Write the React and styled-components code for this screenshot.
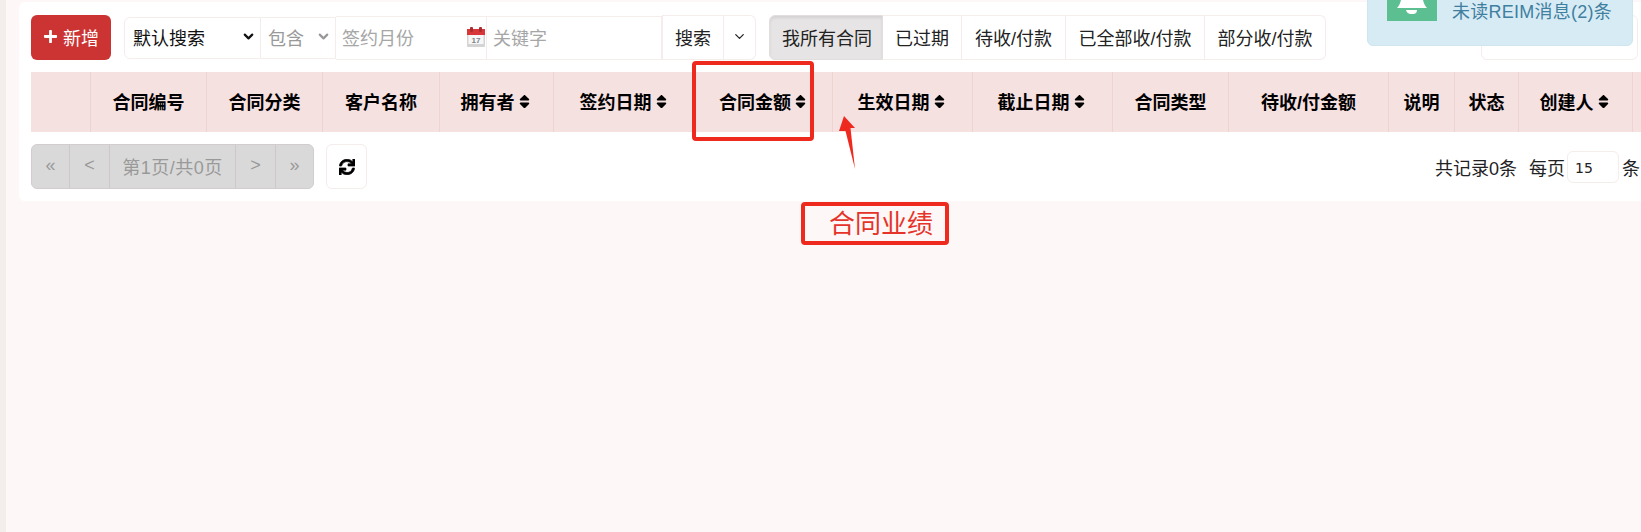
import React from 'react';
import styled, {createGlobalStyle} from 'styled-components';
import {ChevronDown} from 'lucide-react';
import {FaPlus, FaSort, FaSync} from 'react-icons/fa';

const GlobalStyle = createGlobalStyle`
    html, body {
        margin: 0;
        height: 100%;
        overflow: hidden;
        background: #fdf8f7;
    }
    body {
        font-family: "Liberation Sans", "Noto Sans CJK SC", sans-serif;
        font-size: 18px;
        color: #222;
    }
`
const Page = styled.div`
    display: flex;
    height: 532px;
    position: relative;
    overflow: hidden;
`
const SideStrip = styled.div`
    width: 6px;
    background: #f3eeec;
    flex-shrink: 0;
`
const Main = styled.div`
    flex: 1;
    min-width: 0;
    padding: 2px 0 0 13px;
`
const Card = styled.div`
    background: #fff;
    border-radius: 6px 0 0 6px;
    padding: 13px 0 12px 12px;
    overflow: hidden;
`
const Toolbar = styled.div`
    display: flex;
    align-items: center;
    height: 45px;
    padding-right: 3px;
`
const AddButton = styled.button`
    display: flex;
    align-items: center;
    justify-content: center;
    gap: 5px;
    width: 80px;
    height: 45px;
    margin-right: 13px;
    padding: 0 0 2px;
    border: none;
    border-radius: 6px;
    background: #cc3333;
    color: #fff;
    font: inherit;
`
const SelectBox = styled.div`
    display: flex;
    align-items: center;
    justify-content: space-between;
    box-sizing: border-box;
    width: ${p => p.$w}px;
    height: 42px;
    padding: 0 4px 2px ${p => (p.$first ? 8 : 7)}px;
    border: 1px solid #f5ecec;
    border-left-width: ${p => (p.$first ? 1 : 0)}px;
    border-radius: ${p => (p.$first ? '6px 0 0 6px' : '0')};
    color: ${p => (p.$muted ? '#999' : '#111')};
`
const Field = styled.div`
    display: flex;
    align-items: center;
    justify-content: space-between;
    box-sizing: border-box;
    width: ${p => p.$w}px;
    height: 44px;
    padding: 0 1px 2px 6px;
    border: 1px solid #f5ecec;
    border-left-width: 0;
    color: #a6a6a6;
`
const JoinButton = styled.button`
    display: flex;
    align-items: center;
    justify-content: center;
    box-sizing: border-box;
    width: ${p => p.$w}px;
    height: 45px;
    padding: 0 0 2px;
    background: #fff;
    border: 1px solid #f5ecec;
    border-left-width: ${p => (p.$last ? 0 : 1)}px;
    border-radius: ${p => (p.$last ? '0 6px 6px 0' : '0')};
    color: #222;
    font: inherit;
`
const Tabs = styled.div`
    display: flex;
    margin-left: 13px;
`
const Tab = styled.button`
    box-sizing: border-box;
    width: ${p => p.$w}px;
    height: 45px;
    padding: 0 0 2px ${p => (p.$active ? 2 : 0)}px;
    background: ${p => (p.$active ? '#e6e4e4' : '#fff')};
    border: 1px solid ${p => (p.$active ? '#e2dede' : '#f5ecec')};
    border-left-width: ${p => (p.$active ? 1 : 0)}px;
    box-shadow: ${p => (p.$active ? 'inset 0 2px 3px rgba(0, 0, 0, 0.08)' : 'none')};
    color: #222;
    font: inherit;
    &:first-child {
        border-radius: 6px 0 0 6px;
    }
    &:last-child {
        border-radius: 0 6px 6px 0;
    }
`
const ExportButton = styled.button`
    box-sizing: border-box;
    width: 157px;
    height: 45px;
    margin-left: auto;
    padding: 4px 0 0 48px;
    background: #fff;
    border: 1px solid #f5ecec;
    border-radius: 6px;
    color: #222;
    font: inherit;
    text-align: left;
`
const Notice = styled.div`
    position: absolute;
    top: -8px;
    left: 1367px;
    display: flex;
    align-items: flex-end;
    gap: 15px;
    box-sizing: border-box;
    width: 266px;
    height: 54px;
    padding: 0 0 20px 19px;
    background: #d7ebf5;
    border: 1px solid #cfe6f0;
    border-radius: 6px;
    color: #3f7f9f;
    line-height: 25px;
    letter-spacing: 0.25px;
`
const NoticeIcon = styled.svg`
    flex-shrink: 0;
    margin-bottom: 4px;
`
const HeadRow = styled.div`
    display: flex;
    height: 60px;
    margin-top: 12px;
    background: #f6e1e1;
`
const HeadCell = styled.div`
    display: flex;
    align-items: center;
    justify-content: center;
    gap: 1px;
    box-sizing: border-box;
    flex: 0 0 ${p => p.$w}px;
    padding-bottom: 2px;
    border-right: 1px solid #efd3d3;
    font-weight: 700;
    color: #000;
`
const Footer = styled.div`
    display: flex;
    align-items: center;
    height: 45px;
    margin-top: 12px;
`
const Pager = styled.div`
    display: flex;
    height: 45px;
    box-sizing: border-box;
    background: #d9d9d9;
    border: 1px solid #d2cccc;
    border-radius: 6px;
`
const PagerItem = styled.div`
    display: flex;
    align-items: center;
    justify-content: center;
    box-sizing: border-box;
    width: ${p => p.$w}px;
    padding-bottom: 2px;
    border-right: 1px solid #d0c8c8;
    color: #999;
    letter-spacing: ${p => (p.$wide ? 0.5 : 0)}px;
    &:last-child {
        border-right: none;
    }
`
const RefreshButton = styled.button`
    display: flex;
    align-items: center;
    justify-content: center;
    width: 41px;
    height: 45px;
    margin-left: 12px;
    padding: 0;
    background: #fff;
    border: 1px solid #f5ecec;
    border-radius: 6px;
    color: #000;
`
const Summary = styled.div`
    display: flex;
    align-items: center;
    gap: 12px;
    margin-left: auto;
    padding-right: 1px;
    color: #222;
    white-space: nowrap;
`
const PageSize = styled.div`
    display: flex;
    align-items: center;
`
const SizeInput = styled.div`
    box-sizing: border-box;
    width: 52px;
    height: 32px;
    margin: 0 3px 0 2px;
    padding-left: 7px;
    border: 1px solid #f5ecec;
    border-radius: 6px;
    font-family: "DejaVu Sans", sans-serif;
    font-size: 14px;
    line-height: 32px;
`
const MarkBox = styled.div`
    position: absolute;
    box-sizing: border-box;
    left: ${p => p.$x}px;
    top: ${p => p.$y}px;
    width: ${p => p.$w}px;
    height: ${p => p.$h}px;
    border: 4px solid #ee2a1f;
    border-radius: 4px;
`
const MarkLabel = styled(MarkBox)`
    display: flex;
    align-items: center;
    padding-left: 24px;
    color: #e5332a;
    font-size: 26px;
    line-height: 1;
`
const Arrow = styled.svg`
    position: absolute;
    left: 835px;
    top: 112px;
`

const columns = [
    {w: 60, title: ''},
    {w: 116, title: '合同编号'},
    {w: 116, title: '合同分类'},
    {w: 117, title: '客户名称'},
    {w: 114, title: '拥有者', sort: true},
    {w: 142, title: '签约日期', sort: true},
    {w: 137, title: '合同金额', sort: true},
    {w: 140, title: '生效日期', sort: true},
    {w: 140, title: '截止日期', sort: true},
    {w: 116, title: '合同类型'},
    {w: 160, title: '待收/付金额'},
    {w: 66, title: '说明'},
    {w: 64, title: '状态'},
    {w: 114, title: '创建人', sort: true},
    {w: 30, title: ''},
]

const tabs = [
    {w: 114, title: '我所有合同', active: true},
    {w: 79, title: '已过期'},
    {w: 104, title: '待收/付款'},
    {w: 139, title: '已全部收/付款'},
    {w: 121, title: '部分收/付款'},
]

function CalendarIcon() {
    return (
        <svg width="18" height="20" viewBox="0 0 18 20">
            <rect x="0" y="2" width="18" height="18" rx="1" fill="#d4d4d4" />
            <rect x="1.5" y="8" width="15" height="9" fill="#f7f7f7" />
            <rect x="0" y="2" width="18" height="6" fill="#d9363a" />
            <rect x="3" y="0" width="3" height="5" rx="1" fill="#a92c2f" />
            <rect x="12" y="0" width="3" height="5" rx="1" fill="#a92c2f" />
            <text x="9" y="16" textAnchor="middle" fontSize="8" fontWeight="700" fontFamily="Liberation Sans" fill="#7d838a">17</text>
        </svg>
    )
}

function App() {
    return (
        <Page>
            <GlobalStyle />
            <SideStrip />
            <Main>
                <Card>
                    <Toolbar>
                        <AddButton><FaPlus size={15} />新增</AddButton>
                        <SelectBox $w={137} $first>默认搜索<ChevronDown size={15} strokeWidth={3.5} color="#111" /></SelectBox>
                        <SelectBox $w={75} $muted>包含<ChevronDown size={15} strokeWidth={3.5} color="#999" /></SelectBox>
                        <Field $w={151}>签约月份<CalendarIcon /></Field>
                        <Field $w={175}>关键字</Field>
                        <JoinButton $w={62}>搜索</JoinButton>
                        <JoinButton $w={32} $last><ChevronDown size={15} strokeWidth={2} /></JoinButton>
                        <Tabs>
                            {tabs.map(tab => (
                                <Tab key={tab.title} $w={tab.w} $active={tab.active}>{tab.title}</Tab>
                            ))}
                        </Tabs>
                        <ExportButton>/</ExportButton>
                    </Toolbar>
                    <HeadRow>
                        {columns.map((col, i) => (
                            <HeadCell key={i} $w={col.w}>
                                {col.title}
                                {col.sort && <FaSort size={17} />}
                            </HeadCell>
                        ))}
                    </HeadRow>
                    <Footer>
                        <Pager>
                            <PagerItem $w={38}>«</PagerItem>
                            <PagerItem $w={40}>&lt;</PagerItem>
                            <PagerItem $w={126} $wide>第1页/共0页</PagerItem>
                            <PagerItem $w={40}>&gt;</PagerItem>
                            <PagerItem $w={37}>»</PagerItem>
                        </Pager>
                        <RefreshButton><FaSync size={16} stroke="currentColor" strokeWidth={24} /></RefreshButton>
                        <Summary>
                            <span>共记录0条</span>
                            <PageSize>
                                每页
                                <SizeInput>15</SizeInput>
                                条
                            </PageSize>
                        </Summary>
                    </Footer>
                </Card>
            </Main>
            <Notice>
                <NoticeIcon width="50" height="30" viewBox="0 0 50 30">
                    <rect width="50" height="30" fill="#5bbf92" />
                    <path d="M15 0 L35 0 C35 8 37 14 40 17 L10 17 C13 14 15 8 15 0 Z" fill="#fff" />
                    <path d="M19 19 L30 19 C30 23 27 23 25 23 C23 23 20 23 19 19 Z" fill="#fff" />
                </NoticeIcon>
                未读REIM消息(2)条
            </Notice>
            <MarkBox $x={692} $y={61} $w={122} $h={80} />
            <Arrow width="30" height="62" viewBox="835 112 30 62">
                <polygon points="844,116 855,128 850.5,128 855,169 845.5,131 839,131" fill="#ee2a1f" />
            </Arrow>
            <MarkLabel $x={801} $y={202} $w={148} $h={43}>合同业绩</MarkLabel>
        </Page>
    )
}

export default App;
